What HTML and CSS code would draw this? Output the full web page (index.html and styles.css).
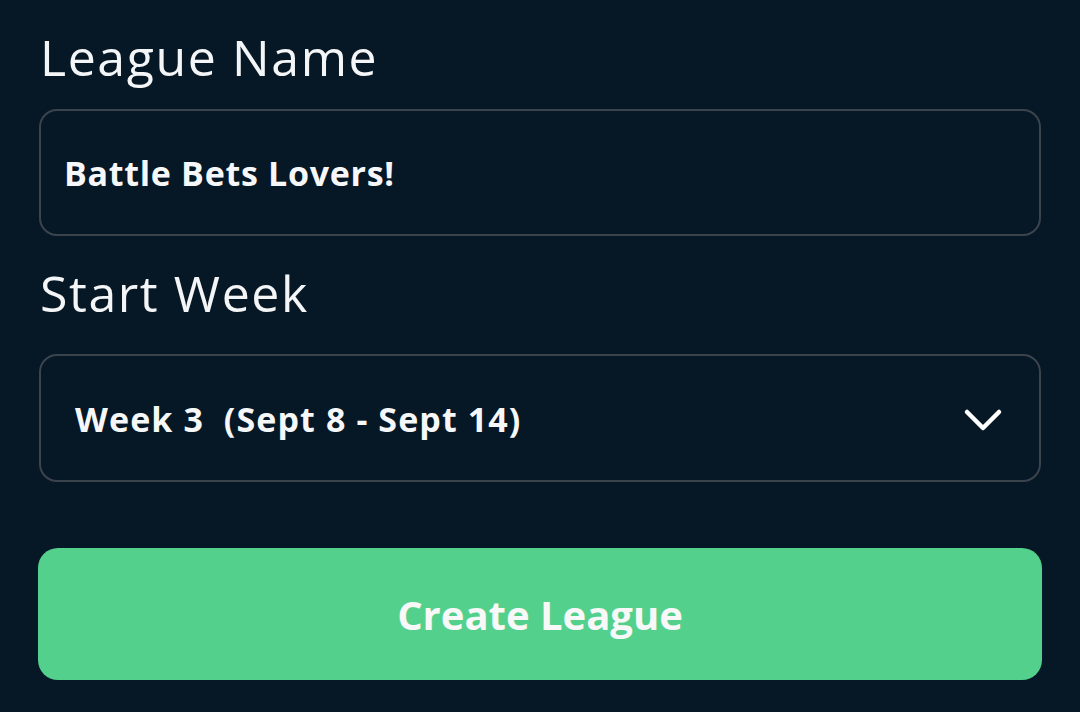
FILE: index.html
```html
<!DOCTYPE html>
<html>
<head>
<meta charset="utf-8">
<link rel="stylesheet" href="styles.css">
</head>
<body>
<div class="form">
  <div class="label">League Name</div>
  <div class="field">
    <span class="value name">Battle Bets Lovers!</span>
  </div>
  <div class="label second">Start Week</div>
  <div class="field select">
    <span class="value week">Week 3&nbsp; (Sept 8 - Sept 14)</span>
    <svg class="chev" width="40" height="26" viewBox="0 0 40 26">
      <path d="M4 5 L20 21 L36 5" fill="none" stroke="#ffffff" stroke-width="4.5" stroke-linecap="round" stroke-linejoin="round"/>
    </svg>
  </div>
  <div class="button">Create League</div>
</div>
</body>
</html>
```
FILE: styles.css
```css
html, body {
  margin: 0;
  padding: 0;
  background: #061726;
  width: 1080px;
  height: 712px;
  overflow: hidden;
  font-family: "Open Sans", "DejaVu Sans", sans-serif;
  color: #f4f5f6;
}
.form {
  display: flex;
  flex-direction: column;
  padding: 26px 39px 0 39px;
}
.label {
  font-size: 50px;
  font-weight: 400;
  line-height: 62px;
  height: 62px;
  padding-left: 1px;
  letter-spacing: 1.6px;
}
.label.second {
  margin-top: 26px;
}
.field {
  margin-top: 21px;
  border: 2px solid #3b444d;
  border-radius: 18px;
  display: flex;
  align-items: center;
  justify-content: space-between;
  box-sizing: border-box;
  height: 127px;
}
.field.select {
  margin-top: 30px;
  height: 128px;
}
.value {
  font-weight: 700;
  color: #f6f7f8;
}
.name {
  font-size: 34px;
  padding-left: 23px;
  letter-spacing: 0.7px;
}
.week {
  font-size: 34px;
  padding-left: 34px;
  letter-spacing: 1.1px;
  padding-top: 2px;
}
.chev {
  margin-right: 36px;
  margin-top: 4px;
}
.button {
  margin-top: 66px;
  height: 132px;
  margin-left: -1px;
  margin-right: -1px;
  background: #53d18c;
  border-radius: 20px;
  display: flex;
  align-items: center;
  justify-content: center;
  font-size: 40px;
  font-weight: 700;
  color: #f7f8f7;
  letter-spacing: 0px;
}
```
